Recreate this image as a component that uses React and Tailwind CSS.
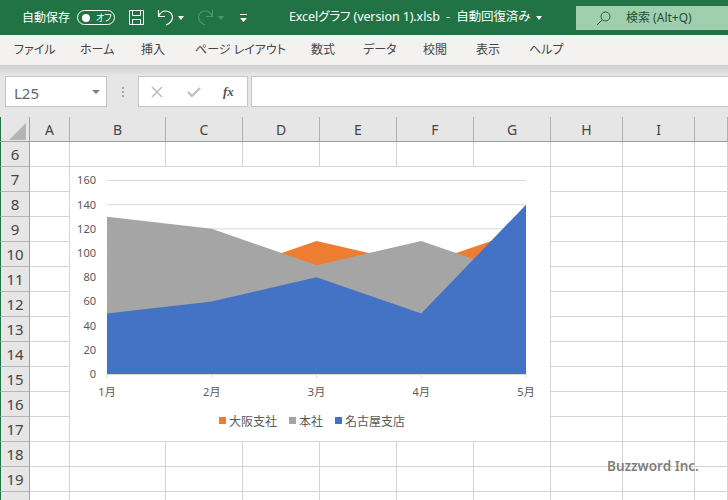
import React from "react";

const tabs = [
  ["ファイル", "w-[66px]"],
  ["ホーム", "w-[61px]"],
  ["挿入", "w-[54px]"],
  ["ページ レイアウト", "w-[116px]"],
  ["数式", "w-[52px]"],
  ["データ", "w-[60px]"],
  ["校閲", "w-[53px]"],
  ["表示", "w-[53px]"],
  ["ヘルプ", "w-[40px]"],
];
const cols = [
  ["A", "w-[40px]"],
  ["B", "w-[96px]"],
  ["C", "w-[77px]"],
  ["D", "w-[77px]"],
  ["E", "w-[77px]"],
  ["F", "w-[77px]"],
  ["G", "w-[77px]"],
  ["H", "w-[72px]"],
  ["I", "w-[72px]"],
  ["", "w-[33px]"],
];
const rows = [6, 7, 8, 9, 10, 11, 12, 13, 14, 15, 16, 17, 18, 19, 20];

const X = [107, 211.75, 316.5, 421.25, 526];
const yOf = (v) => 374 - v * 1.2095;
const area = (vals) =>
  `107,374 ` + vals.map((v, i) => `${X[i]},${yOf(v)}`).join(" ") + ` 526,374`;

function Chart() {
  const textCls = "fill-[#595959] text-[11px]";
  const legendCls = "fill-[#595959] text-[12px]";
  return (
    <svg
      className="absolute left-[70px] top-[167px] w-[480px] h-[274px] bg-white"
      viewBox="70 167 480 274"
    >
      {[0, 20, 40, 60, 80, 100, 120, 140, 160].map((v) => (
        <g key={v}>
          {v > 0 && <line x1="107" x2="526" y1={yOf(v)} y2={yOf(v)} stroke="#d9d9d9" strokeWidth="1" />}
          <text x="96" y={yOf(v) + 4} textAnchor="end" className={textCls}>{v}</text>
        </g>
      ))}
      <polygon points={area([100, 80, 110, 90, 120])} fill="#ed7d31" />
      <polygon points={area([130, 120, 90, 110, 80])} fill="#a5a5a5" />
      <polygon points={area([50, 60, 80, 50, 140])} fill="#4472c4" />
      <line x1="107" x2="526" y1="374.5" y2="374.5" stroke="#d9d9d9" />
      {X.map((x, i) => (
        <g key={i}>
          <line x1={x} x2={x} y1="374" y2="378" stroke="#d9d9d9" />
          <text x={x} y="396" textAnchor="middle" className={textCls}>{i + 1}月</text>
        </g>
      ))}
      <rect x="219" y="417" width="7" height="7" fill="#ed7d31" />
      <text x="229" y="425.5" className={legendCls}>大阪支社</text>
      <rect x="289" y="417" width="7" height="7" fill="#a5a5a5" />
      <text x="299" y="425.5" className={legendCls}>本社</text>
      <rect x="335" y="417" width="7" height="7" fill="#4472c4" />
      <text x="345" y="425.5" className={legendCls}>名古屋支店</text>
    </svg>
  );
}

function TitleBar() {
  return (
    <div className="h-[35px] bg-[#217346] flex text-white text-[12px] shrink-0 [font-feature-settings:'palt']">
      <div className="flex items-center h-full pl-[22px]">
        <span className="w-[49px] whitespace-nowrap">自動保存</span>
        <div className="ml-[6px] w-[38px] h-[15px] rounded-full border border-white flex items-center pl-[4px] gap-[6px]">
          <div className="w-[8px] h-[8px] rounded-full bg-white" />
          <span className="text-[9px] leading-none">オフ</span>
        </div>
        <svg className="ml-[13px]" width="17" height="17" viewBox="0 0 17 17" fill="none" stroke="#fff" strokeWidth="1">
          <path d="M1.500 1.500h14v14h-14z" />
          <path d="M4.500 1.500v5h8v-5M4.500 15.500v-5h8v5" />
        </svg>
        <svg className="ml-[12px]" width="17" height="17" viewBox="0 0 17 17" fill="none" stroke="#fff" strokeWidth="1.200">
          <path d="M1.500 1v6.500h6.500M1.500 7.500C3 4 5 2 8.500 2c4 0 7 2.500 7 6 0 3.500-3 6.500-6.500 8" />
        </svg>
        <svg className="ml-[4px]" width="6" height="4" viewBox="0 0 6 4" fill="#fff"><path d="M0 0h6L3 4z" /></svg>
        <svg className="ml-[13px]" width="17" height="17" viewBox="0 0 17 17" fill="none" stroke="#4f9270" strokeWidth="1.200">
          <path d="M15.500 1v6.500h-6.500M15.500 7.500C14 4 12 2 8.500 2c-4 0-7 2.500-7 6 0 3.500 3 6.500 6.500 8" />
        </svg>
        <svg className="ml-[4px]" width="6" height="4" viewBox="0 0 6 4" fill="#4f9270"><path d="M0 0h6L3 4z" /></svg>
        <svg className="ml-[16px]" width="7" height="8" viewBox="0 0 7 8" fill="#fff">
          <path d="M0 0h7v1H0zM0 4h7L3.500 8z" />
        </svg>
      </div>
      <div className="ml-[42px] flex items-center whitespace-pre text-[12.500px] tracking-[-0.1px]">
        <span>Excelグラフ (version 1).xlsb  -  自動回復済み</span>
        <svg className="ml-[6px]" width="6" height="4" viewBox="0 0 6 4" fill="#fff"><path d="M0 0h6L3 4z" /></svg>
      </div>
      <div className="ml-auto mt-[6px] w-[152px] h-[24px] bg-[#a0cfaf] flex items-center text-[#1f4e35]">
        <svg className="ml-[20px]" width="15" height="15" viewBox="0 0 15 15" fill="none" stroke="#1f5c3a" strokeWidth="1">
          <circle cx="9.500" cy="5.500" r="4.500" />
          <path d="M6 9l-5 5" />
        </svg>
        <span className="ml-[15px] whitespace-nowrap">検索 (Alt+Q)</span>
      </div>
    </div>
  );
}

function FormulaBar() {
  return (
    <div className="h-[52px] flex items-start pt-[11px] pl-[5px] shrink-0 bg-gradient-to-b from-[#cfcfcf] from-0% to-[#e6e6e6] to-[20%]">
      <div className="w-[102px] h-[31px] bg-white border border-[#c6c6c6] flex items-center justify-between pl-[8px] pr-[6px] text-[15px] text-[#666666]">
        <span className="pt-[3px]">L25</span>
        <svg width="8" height="4" viewBox="0 0 8 4" fill="#808080"><path d="M0 0h8L4 4z" /></svg>
      </div>
      <div className="w-[31px] h-[31px] flex flex-col items-center justify-center gap-[2px]">
        {[0, 1, 2].map((i) => <div key={i} className="w-[2px] h-[2px] bg-[#a8a8a8]" />)}
      </div>
      <div className="w-[110px] h-[31px] bg-white border border-[#c6c6c6] flex items-center pl-[12px]">
        <svg width="12" height="12" viewBox="0 0 12 12" fill="none" stroke="#bdbdbd" strokeWidth="1.500"><path d="M1 1l10 10M11 1L1 11" /></svg>
        <svg className="ml-[24px]" width="14" height="12" viewBox="0 0 14 12" fill="none" stroke="#bdbdbd" strokeWidth="2"><path d="M1 6l4 4 8-8" /></svg>
        <span className="ml-[22px] text-[13px] italic font-bold text-[#555555] [font-family:'Liberation_Serif',serif]">fx</span>
      </div>
      <div className="ml-[3px] flex-1 h-[31px] bg-white border-y border-l border-[#c6c6c6]" />
    </div>
  );
}

export default function App() {
  return (
    <div className="relative w-[728px] h-[500px] overflow-hidden flex flex-col bg-white [font-family:'Noto_Sans','Noto_Sans_CJK_JP',sans-serif]">
      <TitleBar />
      <div className="h-[30px] bg-[#f3f2f1] flex items-center pl-[14px] text-[12px] text-[#444444] shrink-0 whitespace-nowrap [font-feature-settings:'palt']">
        {tabs.map(([t, w]) => <span key={t} className={w}>{t}</span>)}
      </div>
      <FormulaBar />
      <div className="flex h-[25px] bg-[#e6e6e6] border-b border-[#9f9f9f] shrink-0">
        <div className="w-[30px] border-r border-[#a0a0a0] relative shrink-0 border-l border-l-[#217346]">
          <svg className="absolute left-[8px] top-[6px]" width="17" height="17" viewBox="0 0 17 17"><path d="M17 0v17H0z" fill="#b4b4b4" /></svg>
        </div>
        {cols.map(([c, w], i) => (
          <div key={i} className={`${w} border-r border-[#b0b0b0] flex items-center justify-center text-[14px] text-[#444444] shrink-0`}>{c}</div>
        ))}
      </div>
      {rows.map((r) => (
        <div key={r} className="flex h-[25px] shrink-0">
          <div className="w-[30px] bg-[#e6e6e6] border-r border-r-[#a0a0a0] border-b border-b-[#b5b5b5] border-l border-l-[#217346] flex items-center justify-center text-[15px] text-[#444444] shrink-0">{r}</div>
          {cols.map(([c, w], i) => (
            <div key={i} className={`${w} border-r border-b border-[#d4d4d4] shrink-0`} />
          ))}
        </div>
      ))}
      <Chart />
      <div className="absolute left-[607px] top-[456px] text-[13.500px] font-semibold text-[#7f7f7f] whitespace-nowrap">Buzzword Inc.</div>
    </div>
  );
}
